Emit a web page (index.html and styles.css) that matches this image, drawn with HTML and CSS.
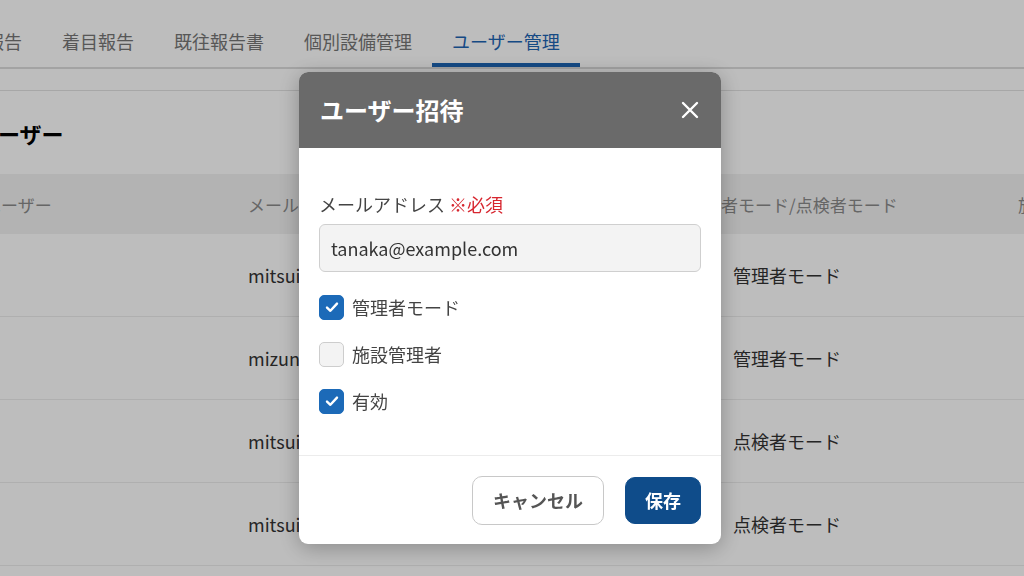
FILE: index.html
```html
<!DOCTYPE html>
<html lang="ja">
<head>
  <meta charset="UTF-8">
  <title>ユーザー管理</title>
  <link rel="stylesheet" href="styles.css">
</head>
<body>
  <div id="page">
    <div id="tabBar">
      <div class="tab">定期報告</div>
      <div class="tab">着目報告</div>
      <div class="tab">既往報告書</div>
      <div class="tab">個別設備管理</div>
      <div class="tab active">ユーザー管理</div>
    </div>
    <div id="subBar"></div>
    <h2 id="pageTitle">ユーザー</h2>
    <div id="userTable">
      <div class="row head">
        <div class="cell first">ユーザー</div>
        <div class="cell">メールアドレス</div>
        <div class="cell mode">管理者モード/点検者モード</div>
        <div class="cell">施設管理者</div>
      </div>
      <div class="row">
        <div class="cell first"></div>
        <div class="cell">mitsui@example.com</div>
        <div class="cell mode">管理者モード</div>
        <div class="cell"></div>
      </div>
      <div class="row">
        <div class="cell first"></div>
        <div class="cell">mizuno@example.com</div>
        <div class="cell mode">管理者モード</div>
        <div class="cell"></div>
      </div>
      <div class="row">
        <div class="cell first"></div>
        <div class="cell">mitsui2@example.com</div>
        <div class="cell mode">点検者モード</div>
        <div class="cell"></div>
      </div>
      <div class="row">
        <div class="cell first"></div>
        <div class="cell">mitsui3@example.com</div>
        <div class="cell mode">点検者モード</div>
        <div class="cell"></div>
      </div>
    </div>
  </div>

  <div id="overlay">
    <div id="inviteModal">
      <div class="modalHeader">
        <div class="modalTitle">ユーザー招待</div>
        <button class="closeButton" aria-label="閉じる">
          <svg width="18" height="18" viewBox="0 0 18 18">
            <path d="M2 2 L16 16 M16 2 L2 16" stroke="#fff" stroke-width="2.4" stroke-linecap="round" fill="none"/>
          </svg>
        </button>
      </div>
      <div class="modalBody">
        <div class="fieldLabel">メールアドレス <span class="required">※必須</span></div>
        <input class="textInput" type="text" value="tanaka@example.com">
        <label class="checkRow">
          <span class="checkBox checked">
            <svg width="16" height="16" viewBox="0 0 16 16"><path d="M3 8.6 L6.4 11.8 L13 4.6" stroke="#fff" stroke-width="2.4" fill="none" stroke-linecap="round" stroke-linejoin="round"/></svg>
          </span>
          <span>管理者モード</span>
        </label>
        <label class="checkRow">
          <span class="checkBox"></span>
          <span>施設管理者</span>
        </label>
        <label class="checkRow">
          <span class="checkBox checked">
            <svg width="16" height="16" viewBox="0 0 16 16"><path d="M3 8.6 L6.4 11.8 L13 4.6" stroke="#fff" stroke-width="2.4" fill="none" stroke-linecap="round" stroke-linejoin="round"/></svg>
          </span>
          <span>有効</span>
        </label>
      </div>
      <div class="modalFooter">
        <button class="btn cancel">キャンセル</button>
        <button class="btn save">保存</button>
      </div>
    </div>
  </div>
</body>
</html>
```

FILE: styles.css
```css
html, body {
  margin: 0;
  width: 1024px;
  height: 576px;
  overflow: hidden;
}
body {
  background: #fff;
  font-family: "Noto Sans CJK JP", "Noto Sans", sans-serif;
  color: #333;
}
#page {
  width: 1024px;
  overflow: hidden;
}
#tabBar {
  display: flex;
  margin-left: -70px;
  border-bottom: 2px solid #dcdcdc;
  width: 1200px;
}
.tab {
  padding: 29px 20px 10px;
  line-height: 24px;
  font-size: 18px;
  color: #767676;
  border-bottom: 4px solid transparent;
  white-space: nowrap;
}
.tab.active {
  color: #1d64b3;
  border-bottom-color: #1d64b3;
}
#subBar {
  height: 21px;
  border-bottom: 1px solid #e2e2e2;
}
#pageTitle {
  margin: 28px 0 27px -24px;
  font-size: 22px;
  line-height: 28px;
  font-weight: bold;
  color: #000;
}
.row {
  display: grid;
  grid-template-columns: 248px 439px 331px 1fr;
  box-sizing: border-box;
  height: 83px;
  align-items: center;
  border-bottom: 1px solid #ececec;
  font-size: 18px;
  color: #333;
  white-space: nowrap;
}
.row.head {
  height: 60px;
  background: #f2f2f2;
  border-bottom: none;
  color: #8a8a8a;
  font-size: 17px;
}
.cell {
  overflow: hidden;
}
.cell.first {
  margin-left: -16px;
}
.cell.mode {
  padding-left: 46px;
}
.row.head .cell.mode {
  padding-left: 0;
}

#overlay {
  position: fixed;
  inset: 0;
  background: rgba(0, 0, 0, 0.26);
  display: flex;
  justify-content: center;
  align-items: flex-start;
  padding: 72px 4px 0 0;
}
#inviteModal {
  width: 422px;
  background: #fff;
  border-radius: 9px;
  overflow: hidden;
  box-shadow: 0 4px 22px rgba(0, 0, 0, 0.28);
}
.modalHeader {
  height: 76px;
  background: #6a6a6a;
  display: flex;
  align-items: center;
  justify-content: space-between;
  padding: 0 21px;
}
.modalTitle {
  color: #fff;
  font-size: 24px;
  font-weight: bold;
  line-height: 30px;
  margin-top: -1px;
}
.closeButton {
  background: none;
  border: none;
  padding: 0;
  margin-right: 1px;
  display: flex;
  cursor: pointer;
}
.modalBody {
  padding: 44px 20px 42px;
  display: flex;
  flex-direction: column;
  gap: 23px;
  border-bottom: 1px solid #ececec;
}
.fieldLabel {
  font-size: 18px;
  line-height: 24px;
  color: #444;
  margin-bottom: -15px;
}
.required {
  color: #d7262f;
}
.textInput {
  height: 48px;
  box-sizing: border-box;
  border: 1px solid #cfcfcf;
  border-radius: 6px;
  background: #f3f3f3;
  padding: 0 11px;
  font-family: inherit;
  font-size: 18px;
  color: #333;
  outline: none;
}
.checkRow {
  display: flex;
  align-items: center;
  gap: 8px;
  height: 24px;
  font-size: 18px;
  color: #444;
}
.checkBox {
  width: 25px;
  height: 25px;
  box-sizing: border-box;
  border-radius: 5px;
  border: 1px solid #cdcdcd;
  background: #f3f3f3;
  display: flex;
  align-items: center;
  justify-content: center;
}
.checkBox.checked {
  background: #1c6ab8;
  border-color: #1c6ab8;
}
.modalFooter {
  height: 88px;
  display: flex;
  align-items: center;
  justify-content: flex-end;
  gap: 21px;
  padding: 0 20px;
}
.btn {
  height: 48px;
  font-family: inherit;
  font-size: 18px;
  font-weight: bold;
  border-radius: 10px;
  cursor: pointer;
}
.btn.cancel {
  width: 132px;
  height: 49px;
  background: #fff;
  border: 1px solid #c8c8c8;
  color: #555;
}
.btn.save {
  width: 76px;
  height: 47px;
  background: #0f4c8a;
  border: 1px solid #0f4c8a;
  color: #fff;
}
```
